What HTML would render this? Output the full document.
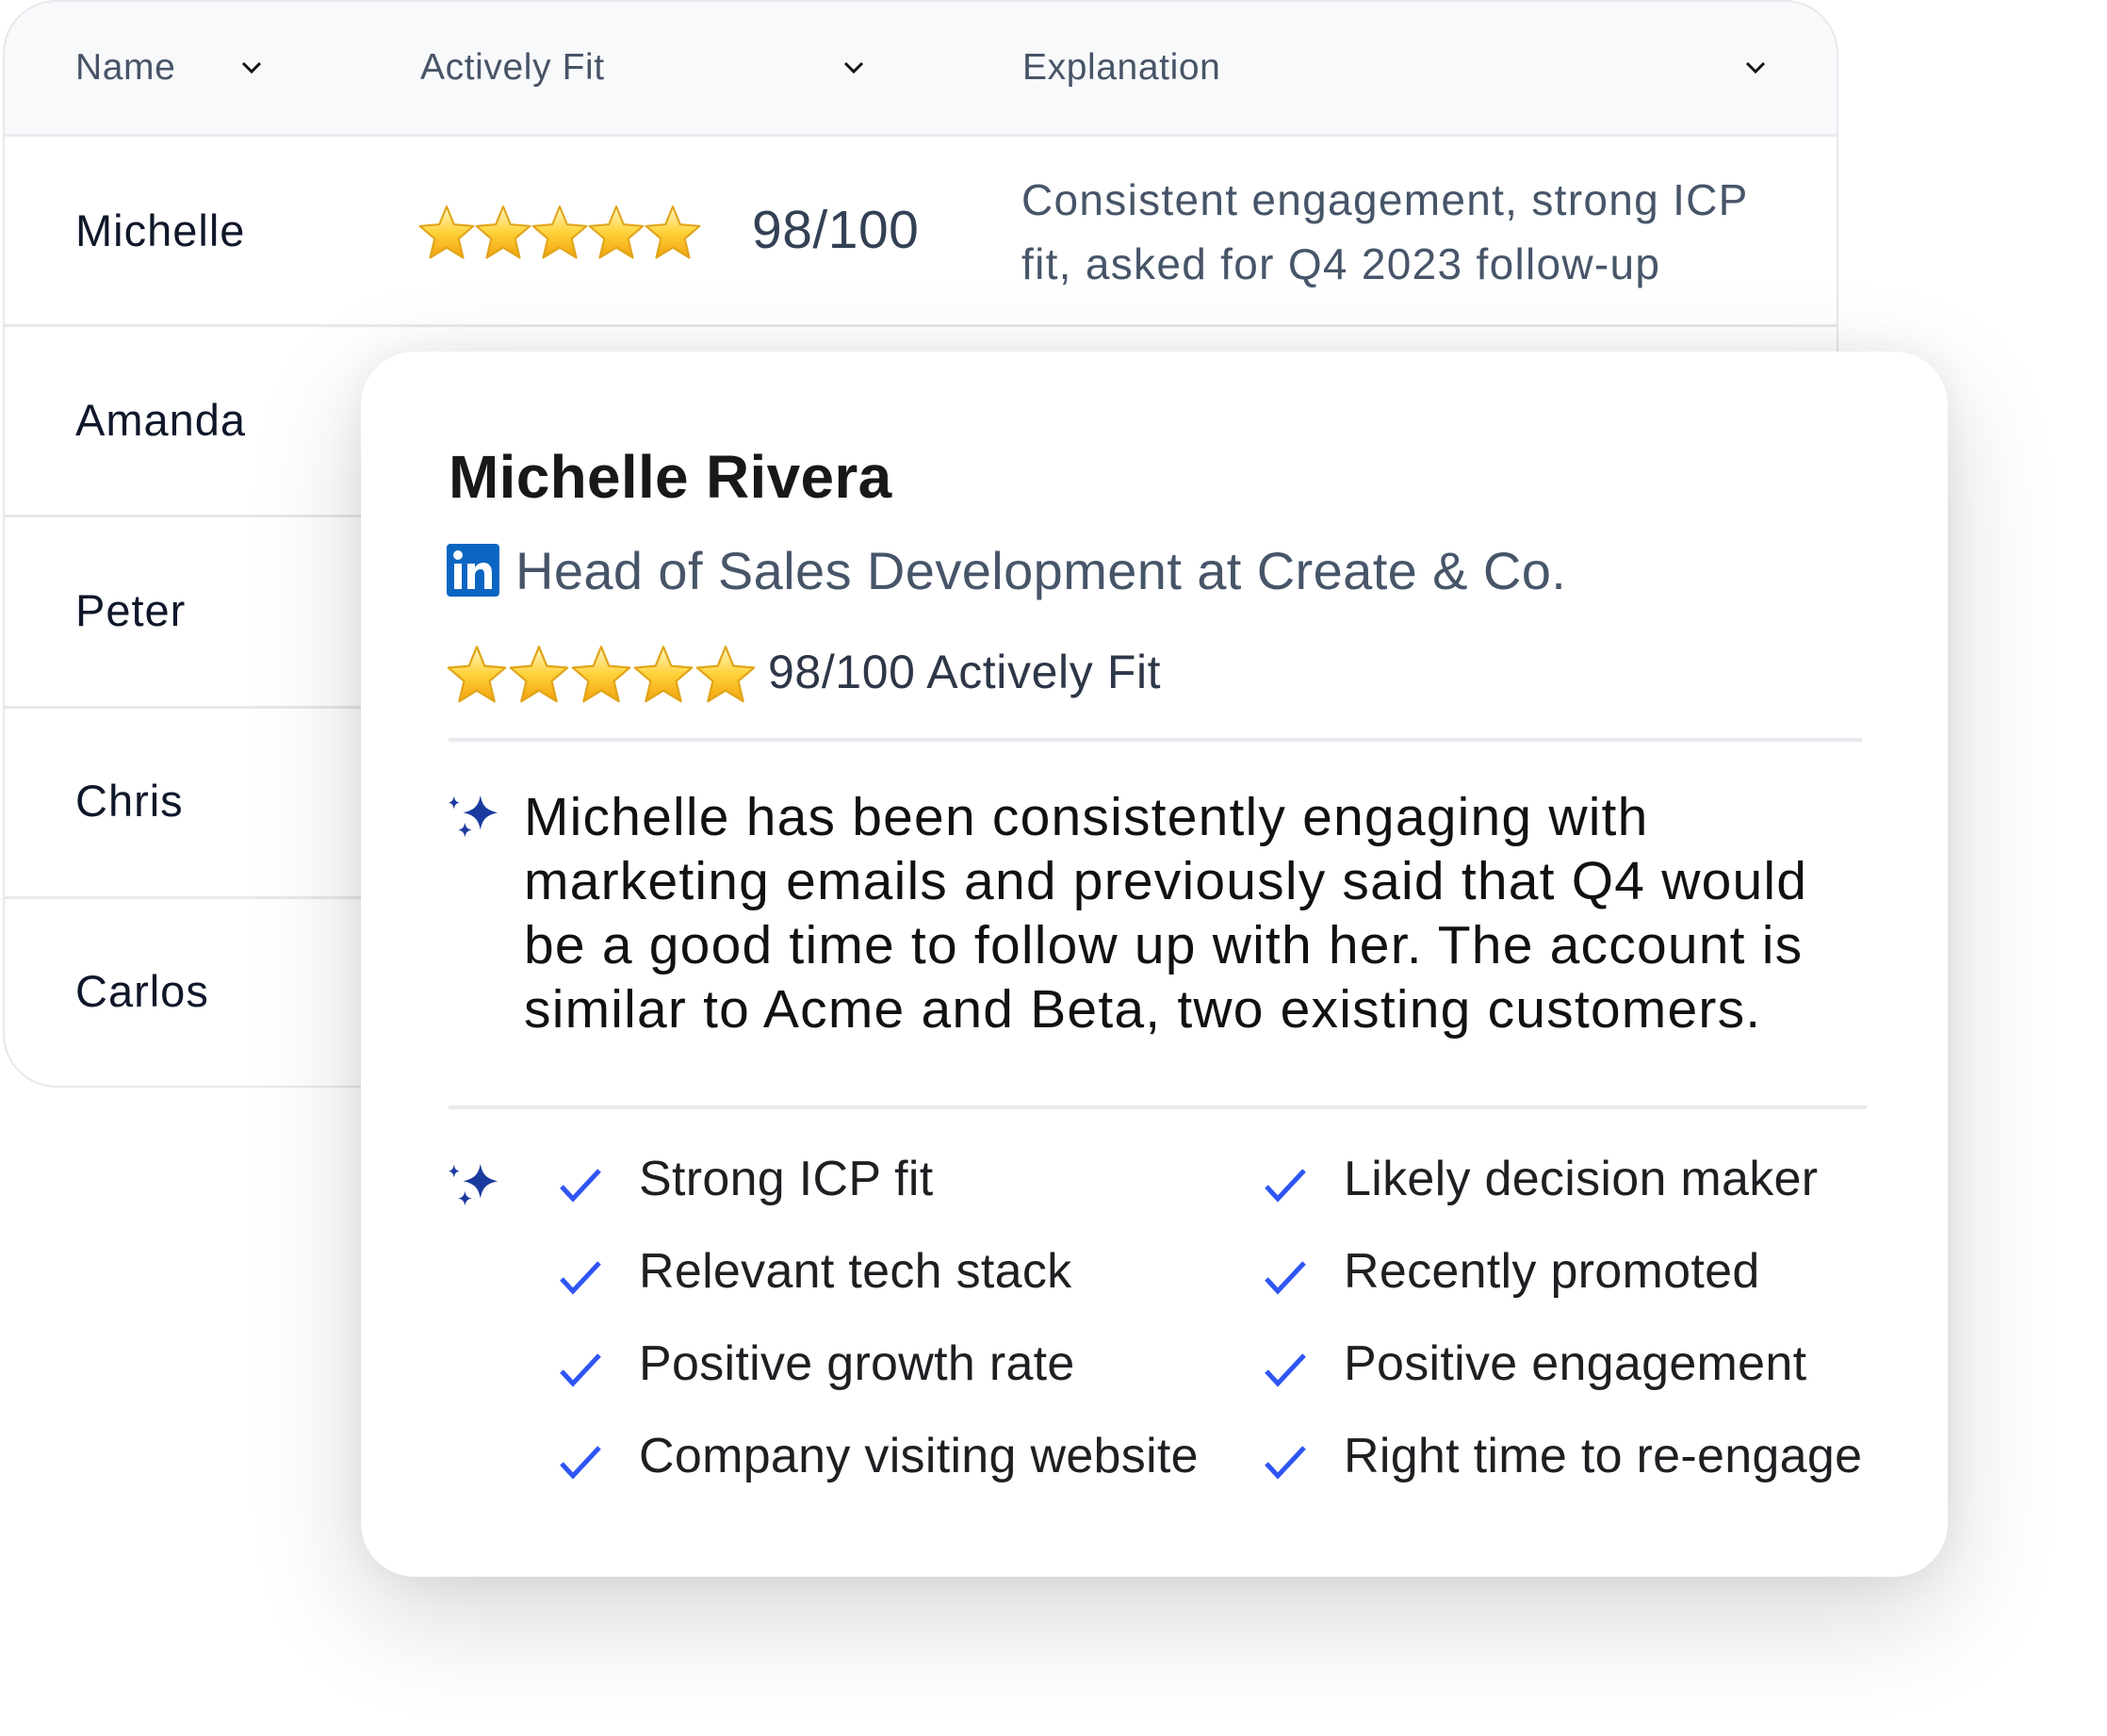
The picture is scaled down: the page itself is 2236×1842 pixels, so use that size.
<!DOCTYPE html>
<html><head><meta charset="utf-8"><style>
*{margin:0;padding:0;box-sizing:border-box}
body{width:2236px;height:1842px;background:#fff;position:relative;overflow:hidden;font-family:"Liberation Sans",Arial,sans-serif}
.a{position:absolute;white-space:nowrap}
.tbl{position:absolute;left:3px;top:0;width:1948px;height:1154px;border:2px solid #e6e8ec;border-radius:57px;background:#fff;overflow:hidden}
.hdr{position:absolute;left:0;top:0;right:0;height:143px;background:#f8f9fb;border-bottom:3px solid #e8eaee}
.row{position:absolute;left:0;right:0;height:202px;border-bottom:3px solid #e6e8ec}
.hd{font-size:39px;color:#475467;line-height:44px;top:50px;letter-spacing:0.6px}
.nm{font-size:47px;color:#0f172a;line-height:52px;letter-spacing:1px}
.card{position:absolute;left:386px;top:376px;width:1684px;height:1300px;background:#fff;border-radius:57px;box-shadow:0 40px 120px rgba(0,0,0,0.16),0 0 40px rgba(0,0,0,0.06)}
.li{font-size:52px;color:#1f1f23;line-height:60px;letter-spacing:0.3px}
.w{position:absolute;left:-3px;top:-3px;width:2236px;height:1842px}
</style></head><body>
<div class="tbl">
 <div class="hdr"></div>
 <div class="row" style="top:143px"></div>
 <div class="row" style="top:345px"></div>
 <div class="row" style="top:548px"></div>
 <div class="row" style="top:750px"></div>
 <div class="row" style="top:952px;border-bottom:none"></div>
</div>
<div class="a hd" style="left:80px">Name</div>
<div class="a hd" style="left:446px">Actively Fit</div>
<div class="a hd" style="left:1085px">Explanation</div>
<svg class="a" style="left:255px;top:64px" width="24" height="16" viewBox="0 0 24 16"><path d="M3 3l9 9 9-9" fill="none" stroke="#111" stroke-width="3"/></svg>
<svg class="a" style="left:894px;top:64px" width="24" height="16" viewBox="0 0 24 16"><path d="M3 3l9 9 9-9" fill="none" stroke="#111" stroke-width="3"/></svg>
<svg class="a" style="left:1851px;top:64px" width="24" height="16" viewBox="0 0 24 16"><path d="M3 3l9 9 9-9" fill="none" stroke="#111" stroke-width="3"/></svg>

<svg width="0" height="0" style="position:absolute"><defs>
<linearGradient id="g" x1="0" y1="0" x2="0" y2="1"><stop offset="0" stop-color="#fff6c4"/><stop offset="0.5" stop-color="#ffd23a"/><stop offset="1" stop-color="#f2a20c"/></linearGradient>
<symbol id="st" viewBox="0 0 60 60"><path d="M30 3l7.6 18.5 19.9 1.6-15.2 13 4.7 19.5L30 45.2 13 55.6l4.7-19.5-15.2-13 19.9-1.6z" fill="url(#g)" stroke="#e0a418" stroke-width="2" stroke-linejoin="round"/></symbol>
<symbol id="sp" viewBox="0 0 60 60"><path d="M36 4c2 10 5 16 19 19-14 3-17 9-19 19-2-10-5-16-19-19 14-3 17-9 19-19z" fill="#1b3a9e"/><path d="M7 5c1 4.5 2 6 6 7-4 1-5 2.5-6 7-1-4.5-2-6-6-7 4-1 5-2.5 6-7z" fill="#1b3a9e"/><path d="M19 34c1 5 2.5 7 7.5 8-5 1-6.5 3-7.5 8-1-5-2.5-7-7.5-8 5-1 6.5-3 7.5-8z" fill="#1b3a9e"/></symbol>
<symbol id="ck" viewBox="0 0 48 40"><path d="M4 22l12 13L44 5" fill="none" stroke="#2f55f5" stroke-width="5"/></symbol>
</defs></svg>

<div class="a nm" style="left:80px;top:219px">Michelle</div>
<div class="a nm" style="left:80px;top:420px">Amanda</div>
<div class="a nm" style="left:80px;top:622px">Peter</div>
<div class="a nm" style="left:80px;top:824px">Chris</div>
<div class="a nm" style="left:80px;top:1026px">Carlos</div>
<div class="a" style="left:443px;top:216px">
<svg width="62" height="62"><use href="#st"/></svg><svg width="62" height="62" style="margin-left:-2px"><use href="#st"/></svg><svg width="62" height="62" style="margin-left:-2px"><use href="#st"/></svg><svg width="62" height="62" style="margin-left:-2px"><use href="#st"/></svg><svg width="62" height="62" style="margin-left:-2px"><use href="#st"/></svg></div>
<div class="a" style="left:798px;top:212px;font-size:57px;color:#334155;line-height:64px;letter-spacing:0.5px">98/100</div>
<div class="a" style="left:1084px;top:185px;font-size:46px;color:#475569;line-height:54px;letter-spacing:1.3px">Consistent engagement, strong ICP</div>
<div class="a" style="left:1084px;top:253px;font-size:46px;color:#475569;line-height:54px;letter-spacing:1.3px">fit, asked for Q4 2023 follow-up</div>

<div class="w">
<div class="card"></div>
<div class="a" style="left:479px;top:473px;font-size:64px;font-weight:bold;color:#18181b;line-height:72px;letter-spacing:0.3px">Michelle Rivera</div>
<svg class="a" style="left:477px;top:580px" width="56" height="56" viewBox="0 0 56 56"><rect width="56" height="56" rx="4" fill="#0a66c2"/><rect x="8" y="21" width="8" height="27" fill="#fff"/><circle cx="12" cy="12" r="5" fill="#fff"/><path d="M22 21h8v4c2-3 5-5 9-5 6 0 9 4 9 11v17h-8V33c0-4-1-6-4-6s-6 2-6 7v14h-8z" fill="#fff"/></svg>
<div class="a" style="left:550px;top:576px;font-size:56px;color:#475569;line-height:66px;letter-spacing:0.4px">Head of Sales Development at Create &amp; Co.</div>
<div class="a" style="left:476px;top:686px">
<svg width="66" height="66"><use href="#st"/></svg><svg width="66" height="66"><use href="#st"/></svg><svg width="66" height="66"><use href="#st"/></svg><svg width="66" height="66"><use href="#st"/></svg><svg width="66" height="66"><use href="#st"/></svg></div>
<div class="a" style="left:818px;top:688px;font-size:50px;color:#2d3748;line-height:56px;letter-spacing:0.6px">98/100 Actively Fit</div>
<div class="a" style="left:479px;top:786px;width:1500px;height:4px;background:#e8eaee"></div>
<svg class="a" style="left:478px;top:843px" width="58" height="58"><use href="#sp"/></svg>
<div class="a" style="left:559px;top:836px;font-size:57px;color:#111;line-height:68px;letter-spacing:1.2px">Michelle has been consistently engaging with<br>marketing emails and previously said that Q4 would<br>be a good time to follow up with her. The account is<br>similar to Acme and Beta, two existing customers.</div>
<div class="a" style="left:479px;top:1176px;width:1505px;height:4px;background:#e8eaee"></div>
<svg class="a" style="left:478px;top:1234px" width="58" height="58"><use href="#sp"/></svg>
<svg class="a" style="left:595px;top:1240px" width="48" height="40"><use href="#ck"/></svg>
<svg class="a" style="left:595px;top:1338px" width="48" height="40"><use href="#ck"/></svg>
<svg class="a" style="left:595px;top:1436px" width="48" height="40"><use href="#ck"/></svg>
<svg class="a" style="left:595px;top:1534px" width="48" height="40"><use href="#ck"/></svg>
<svg class="a" style="left:1343px;top:1240px" width="48" height="40"><use href="#ck"/></svg>
<svg class="a" style="left:1343px;top:1338px" width="48" height="40"><use href="#ck"/></svg>
<svg class="a" style="left:1343px;top:1436px" width="48" height="40"><use href="#ck"/></svg>
<svg class="a" style="left:1343px;top:1534px" width="48" height="40"><use href="#ck"/></svg>
<div class="a li" style="left:681px;top:1224px">Strong ICP fit</div>
<div class="a li" style="left:681px;top:1322px">Relevant tech stack</div>
<div class="a li" style="left:681px;top:1420px">Positive growth rate</div>
<div class="a li" style="left:681px;top:1518px">Company visiting website</div>
<div class="a li" style="left:1429px;top:1224px">Likely decision maker</div>
<div class="a li" style="left:1429px;top:1322px">Recently promoted</div>
<div class="a li" style="left:1429px;top:1420px">Positive engagement</div>
<div class="a li" style="left:1429px;top:1518px">Right time to re-engage</div>
</div>
</body></html>
